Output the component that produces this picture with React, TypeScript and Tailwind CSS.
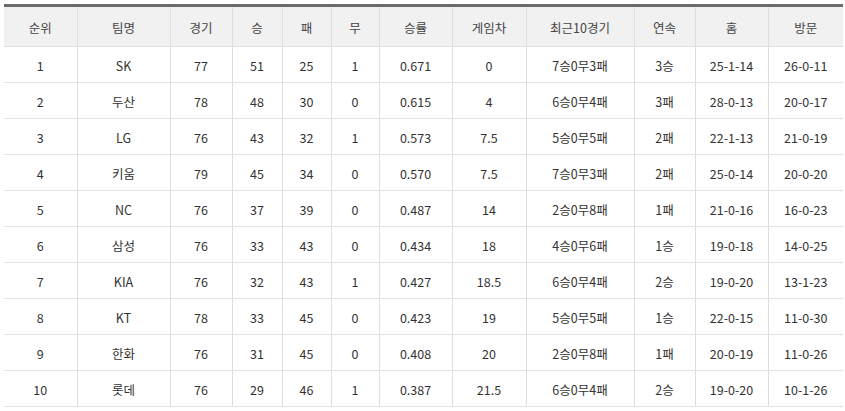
import React from 'react';

const columns = [
    { label: '순위', width: 73 },
    { label: '팀명', width: 93 },
    { label: '경기', width: 62 },
    { label: '승', width: 50 },
    { label: '패', width: 49 },
    { label: '무', width: 48 },
    { label: '승률', width: 73 },
    { label: '게임차', width: 74 },
    { label: '최근10경기', width: 108 },
    { label: '연속', width: 61 },
    { label: '홈', width: 73 },
    { label: '방문', width: 75 },
];

const standings = [
    ['1', 'SK', '77', '51', '25', '1', '0.671', '0', '7승0무3패', '3승', '25-1-14', '26-0-11'],
    ['2', '두산', '78', '48', '30', '0', '0.615', '4', '6승0무4패', '3패', '28-0-13', '20-0-17'],
    ['3', 'LG', '76', '43', '32', '1', '0.573', '7.5', '5승0무5패', '2패', '22-1-13', '21-0-19'],
    ['4', '키움', '79', '45', '34', '0', '0.570', '7.5', '7승0무3패', '2패', '25-0-14', '20-0-20'],
    ['5', 'NC', '76', '37', '39', '0', '0.487', '14', '2승0무8패', '1패', '21-0-16', '16-0-23'],
    ['6', '삼성', '76', '33', '43', '0', '0.434', '18', '4승0무6패', '1승', '19-0-18', '14-0-25'],
    ['7', 'KIA', '76', '32', '43', '1', '0.427', '18.5', '6승0무4패', '2승', '19-0-20', '13-1-23'],
    ['8', 'KT', '78', '33', '45', '0', '0.423', '19', '5승0무5패', '1승', '22-0-15', '11-0-30'],
    ['9', '한화', '76', '31', '45', '0', '0.408', '20', '2승0무8패', '1패', '20-0-19', '11-0-26'],
    ['10', '롯데', '76', '29', '46', '1', '0.387', '21.5', '6승0무4패', '2승', '19-0-20', '10-1-26'],
];

export default function App() {
    return (
        <div className="w-[845px] h-[411px] bg-white pt-1 pl-1 font-['Noto_Sans_CJK_KR','Noto_Sans',sans-serif]">
            <table className="w-[839px] table-fixed border-collapse text-[12.5px] text-[#333]">
                <colgroup>
                    {columns.map((col) => (
                        <col key={col.label} style={{ width: col.width }} />
                    ))}
                </colgroup>
                <thead>
                    <tr className="h-[41px] border-t-[3px] border-[#6b6b6b] bg-[#f1f1f1]">
                        {columns.map((col, i) => (
                            <th
                                key={col.label}
                                className={`pt-1 font-normal text-[#444] border-b border-[#dedede] ${i > 0 ? 'border-l' : ''}`}
                            >
                                {col.label}
                            </th>
                        ))}
                    </tr>
                </thead>
                <tbody>
                    {standings.map((row) => (
                        <tr key={row[0]} className="h-[36px]">
                            {row.map((cell, i) => (
                                <td
                                    key={i}
                                    className={`pt-[3px] text-center border-b border-[#e2e2e2] ${i > 0 ? 'border-l border-l-[#dedede]' : ''}`}
                                >
                                    {cell}
                                </td>
                            ))}
                        </tr>
                    ))}
                </tbody>
            </table>
        </div>
    );
}
